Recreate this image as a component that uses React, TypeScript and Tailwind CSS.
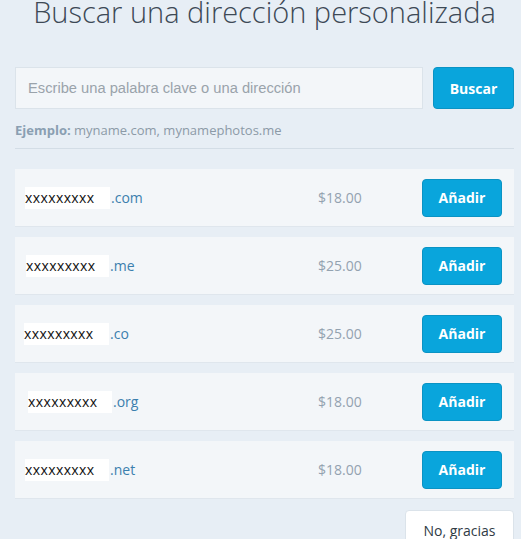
import React from "react";

const rows = [
  { tld: ".com", price: "$18.00", boxW: "w-[85px]", pad: "pl-[10px]" },
  { tld: ".me", price: "$25.00", boxW: "w-[83px]", pad: "pl-[11px]" },
  { tld: ".co", price: "$25.00", boxW: "w-[85px]", pad: "pl-[9px]" },
  { tld: ".org", price: "$18.00", boxW: "w-[84px]", pad: "pl-[13px]" },
  { tld: ".net", price: "$18.00", boxW: "w-[84px]", pad: "pl-[10px]" },
];

export default function App() {
  return (
    <div
      className="w-[521px] h-[539px] overflow-hidden bg-[#e7eef5] pl-[15px] pr-[7px]"
      style={{ fontFamily: '"Open Sans", "Liberation Sans", sans-serif' }}
    >
      <h1 className="text-center text-[29px] font-light leading-[30px] text-[#3d4955] mt-[-3px] tracking-[0px]">
        Buscar una dirección personalizada
      </h1>
      <div className="flex mt-[40px] gap-[10px]">
        <div className="flex-1 h-[42px] bg-[#f3f6f9] border border-[#dbe3ea] flex items-center pl-[12px]">
          <span
            className="text-[14.7px] text-[#9aa3ab]"
            style={{ fontFamily: '"Liberation Sans", Arial, sans-serif' }}
          >
            Escribe una palabra clave o una dirección
          </span>
        </div>
        <button className="w-[81px] h-[42px] rounded-[4px] bg-[#09a5dc] border border-[#0a93c4] text-white font-bold text-[14px]">
          Buscar
        </button>
      </div>
      <div className="mt-[12px] text-[13px] text-[#8c9aa7] leading-[18px]">
        <span className="font-bold text-[#8a9fb2]">Ejemplo:</span> myname.com, mynamephotos.me
      </div>
      <div className="mt-[9px] h-px bg-[#d3dde6]" />
      <div className="mt-[20px] flex flex-col gap-[10px]">
        {rows.map((r) => (
          <div
            key={r.tld}
            className="h-[58px] bg-[#f3f6f9] flex items-center pr-[12px] border-b border-[#dfe6ed]"
          >
            <div className={`flex items-center ${r.pad} w-[260px]`}>
              <span className={`bg-white ${r.boxW} text-[14px] text-[#111] leading-[22px] tracking-[0.4px]`}>
                xxxxxxxxx
              </span>
              <span className="text-[14px] text-[#3b7fae] ml-[1px]">{r.tld}</span>
            </div>
            <div className="flex-1 text-[14px] text-[#93a2b0] pl-[43px]">{r.price}</div>
            <button className="w-[80px] h-[38px] rounded-[4px] bg-[#09a5dc] border border-[#0a93c4] text-white font-bold text-[14px]">
              Añadir
            </button>
          </div>
        ))}
      </div>
      <div className="flex justify-end mt-[11px]">
        <button className="w-[109px] h-[40px] rounded-[4px] bg-white border border-[#dbe3ea] text-[#2f3b45] text-[14px]">
          No, gracias
        </button>
      </div>
    </div>
  );
}
